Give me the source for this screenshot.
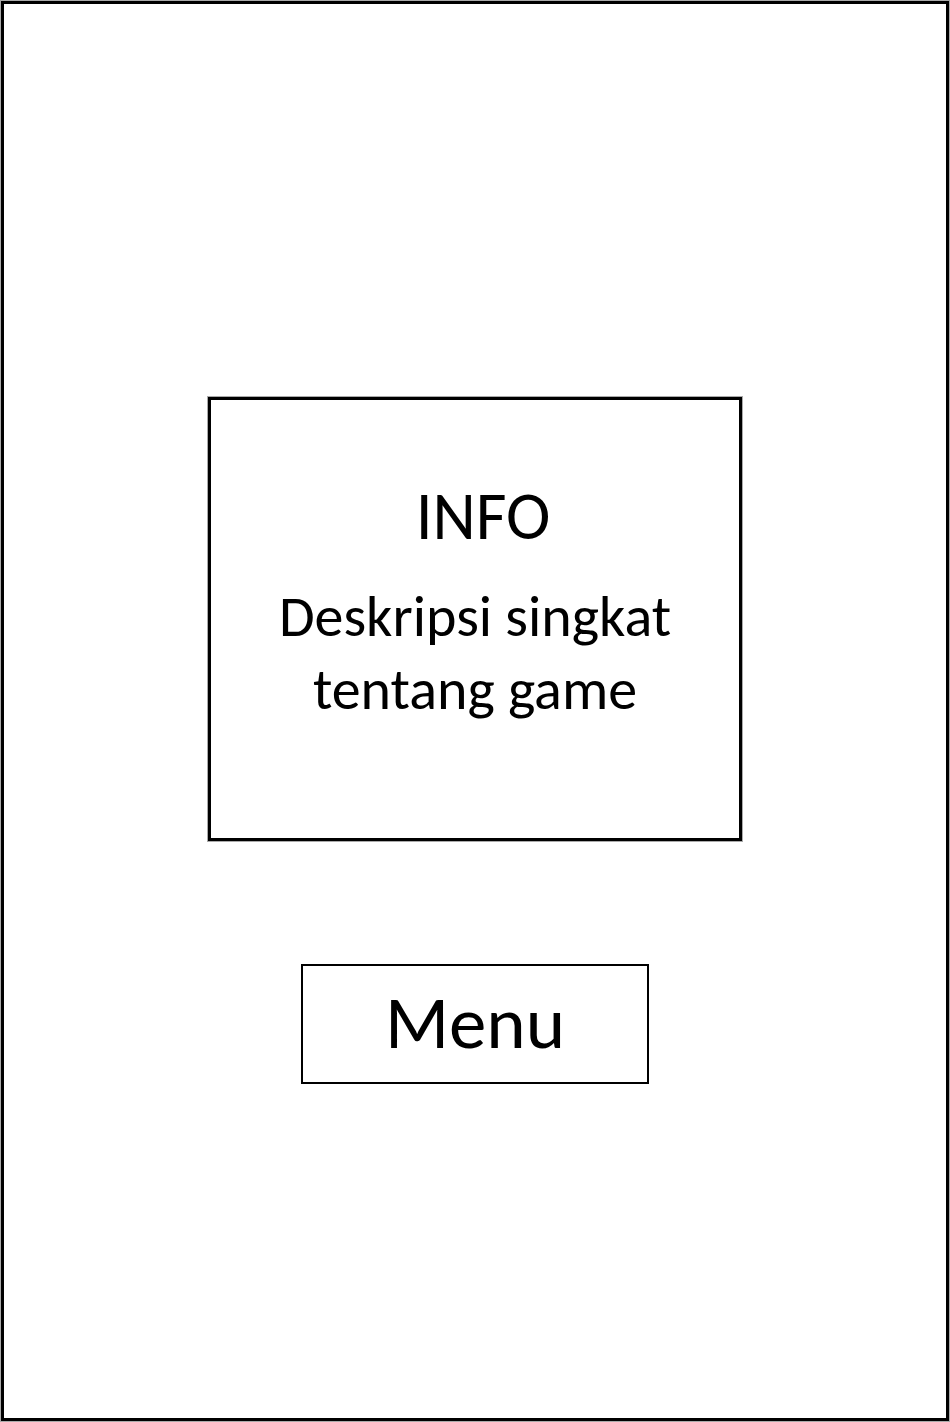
<main class="screen">
  <section class="card">
    <h1>INFO</h1>
    <p>Deskripsi singkat tentang game</p>
  </section>
  <button class="menu" type="button">Menu</button>
</main>

<style>
  :global(body) {
    margin: 0;
    background: #fff;
  }
  .screen {
    box-sizing: border-box;
    min-height: calc(100vh - 2px);
    margin: 1px;
    padding: 58px 20px 0;
    border: 3px solid #000;
    box-shadow: 0 0 0 1px #aaa;
    display: flex;
    flex-direction: column;
    align-items: center;
    justify-content: center;
    gap: 123px;
    color: #000;
    background: #fff;
    font-family: Carlito, Calibri, Lato, sans-serif;
  }
  .card {
    box-sizing: border-box;
    width: 59%;
    min-width: 534px;
    padding: 76px 48px 112px;
    border: 3px solid #000;
    box-shadow: 0 0 0 1px #aaa;
    text-align: center;
  }
  h1 {
    margin: 0 0 24px;
    padding-left: 16px;
    font-size: 67px;
    line-height: 80px;
    font-weight: 400;
  }
  p {
    margin: 0;
    font-size: 58px;
    line-height: 73px;
  }
  .menu {
    box-sizing: border-box;
    width: 348px;
    padding: 15px 16px 17px;
    border: 2px solid #000;
    background: #fff;
    color: #000;
    font: inherit;
    font-size: 75px;
    line-height: 84px;
    cursor: pointer;
  }
</style>
